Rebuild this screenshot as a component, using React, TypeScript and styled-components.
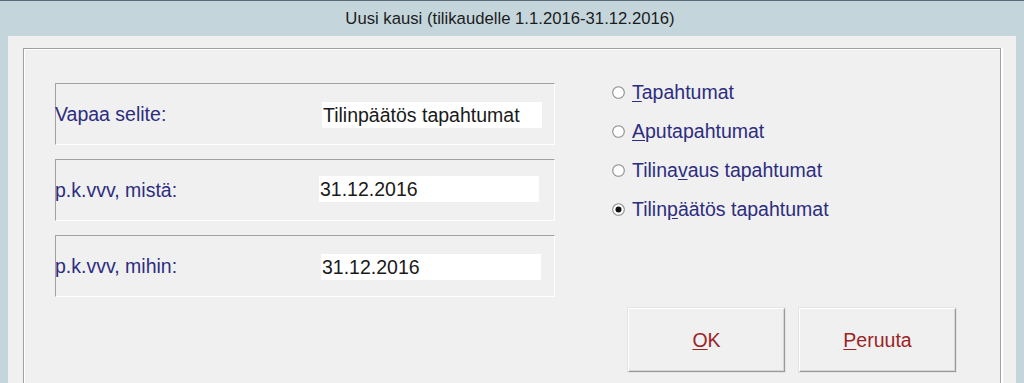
import React from "react";
import styled, { createGlobalStyle } from "styled-components";

const Global = createGlobalStyle`
  html, body { margin: 0; padding: 0; }
  body {
    background: #c4d6dc;
    font-family: "Liberation Sans", Arial, sans-serif;
    overflow: hidden;
  }
`;

const Window = styled.div`
  width: 1024px;
  height: 383px;
  overflow: hidden;
  display: flex;
  flex-direction: column;
  background: #c4d6dc;
  border-top: 1px solid #5b6a78;
  box-sizing: border-box;
`;

const TitleBar = styled.div`
  height: 35px;
  flex: none;
  display: flex;
  align-items: center;
  justify-content: center;
  padding-right: 4px;
  font-size: 16.7px;
  color: #1c1c1c;
`;

const Client = styled.div`
  flex: 1;
  margin: 0 8px;
  background: #f0f0f0;
  padding: 12px 13px 0 15px;
  display: flex;
  flex-direction: column;
`;

const GroupBox = styled.div`
  flex: 1;
  border-top: 1px solid #a0a0a0;
  border-left: 1px solid #a0a0a0;
  border-right: 1px solid #a0a0a0;
  box-shadow: inset 1px 1px 0 #ffffff, 1px 0 0 #ffffff, 2px 0 0 #ffffff;
  margin-right: 2px;
  display: flex;
  align-items: flex-start;
  padding: 24px 0 0 31px;
  gap: 57px;
`;

const FieldColumn = styled.div`
  display: flex;
  flex-direction: column;
  gap: 14px;
  margin-top: 10px;
`;

const FieldPanel = styled.div`
  width: 500px;
  height: 62px;
  box-sizing: border-box;
  border-top: 1px solid #a0a0a0;
  border-left: 1px solid #a0a0a0;
  border-right: 1px solid #ffffff;
  border-bottom: 1px solid #ffffff;
  display: flex;
  align-items: center;
`;

const FieldLabel = styled.span<{ $w: number }>`
  width: ${(p) => p.$w}px;
  flex: none;
  font-size: 19.5px;
  color: #2d2d80;
  margin-left: -1px;
`;

const FieldInput = styled.div<{ $top: number }>`
  width: 220px;
  height: 26px;
  background: #ffffff;
  font-size: 19.5px;
  color: #1a1a1a;
  display: flex;
  align-items: center;
  padding-left: 1px;
  box-sizing: border-box;
  align-self: flex-start;
  margin-top: ${(p) => p.$top}px;
`;

const RightColumn = styled.div`
  display: flex;
  flex-direction: column;
`;

const RadioRow = styled.div`
  height: 39px;
  display: flex;
  align-items: center;
  gap: 7px;
  font-size: 19.5px;
  color: #2d2d80;
  u { text-underline-offset: 2px; }
`;

const ButtonRow = styled.div`
  display: flex;
  gap: 14px;
  margin-top: 79px;
  margin-left: 16px;
`;

const Button = styled.div`
  width: 157px;
  height: 64px;
  box-sizing: border-box;
  background: #f0f0f0;
  border-top: 1px solid #ffffff;
  border-left: 1px solid #ffffff;
  border-right: 1px solid #9a9a9a;
  border-bottom: 1px solid #9a9a9a;
  box-shadow: inset -1px -1px 0 #d6d6d6, 0 0 0 1px #e4e4e4;
  display: flex;
  align-items: center;
  justify-content: center;
  font-size: 19.5px;
  color: #9a2424;
  u { text-underline-offset: 2px; }
`;

const Radio: React.FC<{ checked?: boolean }> = ({ checked }) => (
  <svg width="13" height="13" viewBox="0 0 13 13" style={{ flex: "none" }}>
    <circle cx="6.5" cy="6.5" r="5.8" fill="#ffffff" stroke="#8c8c8c" strokeWidth="1.1" />
    {checked && <circle cx="6.5" cy="6.5" r="3" fill="#111111" />}
  </svg>
);

const fields = [
  { label: "Vapaa selite:", w: 267, top: 18, value: "Tilinpäätös tapahtumat" },
  { label: "p.k.vvv, mistä:", w: 264, top: 16, value: "31.12.2016" },
  { label: "p.k.vvv, mihin:", w: 266, top: 18, value: "31.12.2016" },
];

export default function App() {
  return (
    <>
      <Global />
      <Window>
        <TitleBar>Uusi kausi (tilikaudelle 1.1.2016-31.12.2016)</TitleBar>
        <Client>
          <GroupBox>
            <FieldColumn>
              {fields.map((f) => (
                <FieldPanel key={f.label}>
                  <FieldLabel $w={f.w}>{f.label}</FieldLabel>
                  <FieldInput $top={f.top}>{f.value}</FieldInput>
                </FieldPanel>
              ))}
            </FieldColumn>
            <RightColumn>
              <RadioRow>
                <Radio />
                <span><u>T</u>apahtumat</span>
              </RadioRow>
              <RadioRow>
                <Radio />
                <span><u>A</u>putapahtumat</span>
              </RadioRow>
              <RadioRow>
                <Radio />
                <span>Tilina<u>v</u>aus tapahtumat</span>
              </RadioRow>
              <RadioRow>
                <Radio checked />
                <span>Tilin<u>p</u>äätös tapahtumat</span>
              </RadioRow>
              <ButtonRow>
                <Button><span><u>O</u>K</span></Button>
                <Button><span><u>P</u>eruuta</span></Button>
              </ButtonRow>
            </RightColumn>
          </GroupBox>
        </Client>
      </Window>
    </>
  );
}
